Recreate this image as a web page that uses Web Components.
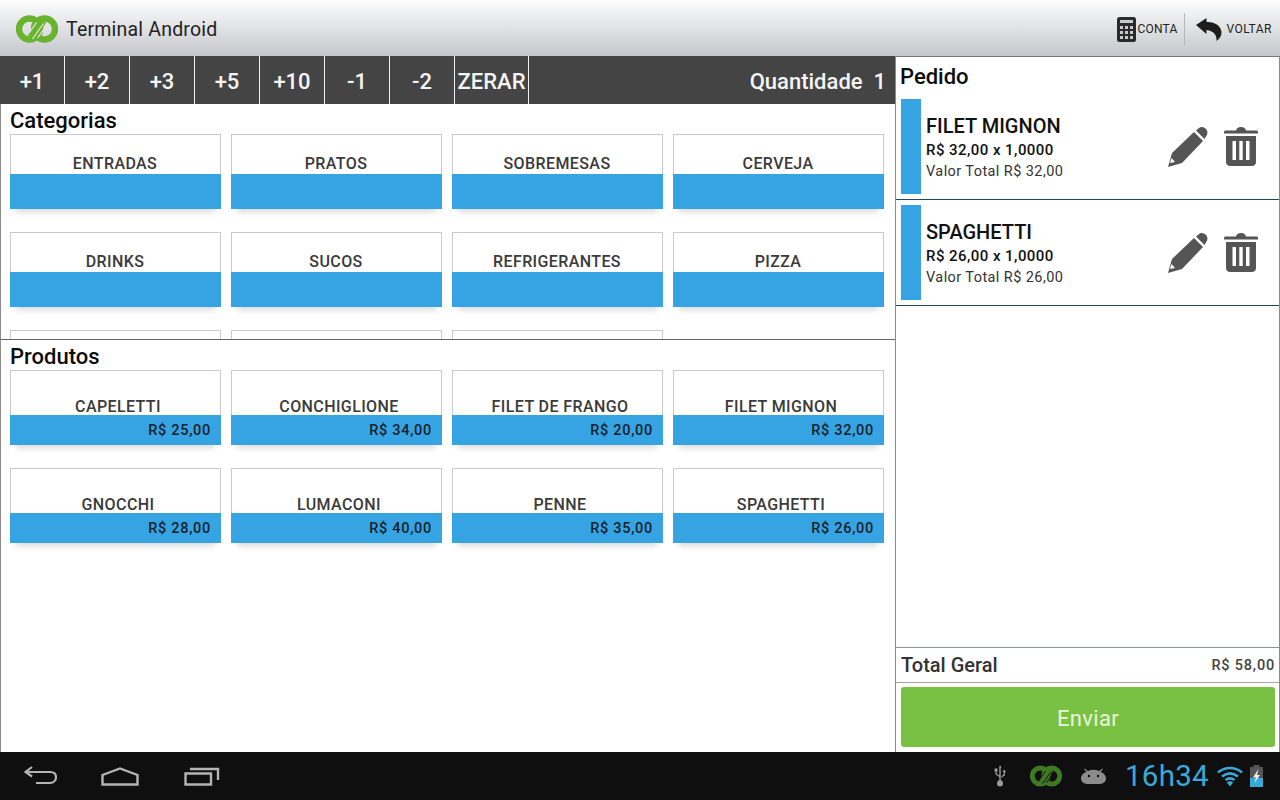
<!DOCTYPE html>
<html lang="pt">
<head>
<meta charset="utf-8">
<title>Terminal Android</title>
<style>
  html, body { margin: 0; padding: 0; height: 100%; overflow: hidden; background: #fff; }
  body { font-family: Roboto, "Liberation Sans", sans-serif; }
  #app { display: flex; flex-direction: column; width: 1280px; height: 800px; }
</style>
</head>
<body>
<div id="app">
  <action-bar></action-bar>
  <main-area>
    <div slot="left">
      <qty-toolbar quantity="1"></qty-toolbar>
      <panel-section title="Categorias" height="235">
        <grid-card name="ENTRADAS"></grid-card>
        <grid-card name="PRATOS"></grid-card>
        <grid-card name="SOBREMESAS"></grid-card>
        <grid-card name="CERVEJA"></grid-card>
        <grid-card name="DRINKS"></grid-card>
        <grid-card name="SUCOS"></grid-card>
        <grid-card name="REFRIGERANTES"></grid-card>
        <grid-card name="PIZZA"></grid-card>
        <!-- terceira linha cortada pelo scroll, sem texto visivel -->
        <grid-card></grid-card>
        <grid-card></grid-card>
        <grid-card></grid-card>
      </panel-section>
      <panel-section title="Produtos" divider>
        <grid-card name="CAPELETTI" price="R$ 25,00"></grid-card>
        <grid-card name="CONCHIGLIONE" price="R$ 34,00"></grid-card>
        <grid-card name="FILET DE FRANGO" price="R$ 20,00"></grid-card>
        <grid-card name="FILET MIGNON" price="R$ 32,00"></grid-card>
        <grid-card name="GNOCCHI" price="R$ 28,00"></grid-card>
        <grid-card name="LUMACONI" price="R$ 40,00"></grid-card>
        <grid-card name="PENNE" price="R$ 35,00"></grid-card>
        <grid-card name="SPAGHETTI" price="R$ 26,00"></grid-card>
      </panel-section>
    </div>
    <order-panel slot="right" total="R$ 58,00">
      <order-item name="FILET MIGNON" unit="R$ 32,00 x 1,0000" total="Valor Total R$ 32,00"></order-item>
      <order-item name="SPAGHETTI" unit="R$ 26,00 x 1,0000" total="Valor Total R$ 26,00"></order-item>
    </order-panel>
  </main-area>
  <system-bar></system-bar>
</div>

<script>
const LOGO = (color, cut) => `
  <circle cx="13.5" cy="14" r="10.5" fill="none" stroke="${color}" stroke-width="6.4"/>
  <circle cx="28.5" cy="14" r="10.5" fill="none" stroke="${color}" stroke-width="6.4"/>
  <path d="M14 21.5 L24 7 M18 21 L28 6.5" stroke="${color}" stroke-width="5" fill="none"/>
  <path d="M13 18 L20.5 7.5 M16.5 24 L27.5 8.5 M21.5 23 L29 12.5" stroke="${cut}" stroke-width="1.2" fill="none"/>`;

class ActionBar extends HTMLElement {
  connectedCallback() {
    this.attachShadow({mode: 'open'}).innerHTML = `
      <style>
        :host { display: flex; align-items: center; flex: 0 0 56px; box-sizing: border-box; height: 56px; padding-top: 2px;
          background: linear-gradient(#fdfdfd, #c4c7cc); color: #1c1c1c; }
        .logo { margin-left: 16px; width: 42px; height: 28px; }
        h1 { margin: 0 0 0 8px; font: 400 19.5px Roboto, sans-serif; letter-spacing: .2px; color: #222; flex: 1; }
        .act { display: flex; align-items: center; font: 400 12px Roboto, sans-serif; letter-spacing: .2px; color: #222; }
        .sep { width: 1px; height: 32px; background: #b4b7bb; margin: 0 11px 0 7px; }
        .conta svg { margin-right: 1px; }
        .voltar { margin-right: 8px; letter-spacing: .5px; }
      </style>
      <svg class="logo" viewBox="0 0 42 28">${LOGO('#69b32e', '#e6e8ea')}</svg>
      <h1>Terminal Android</h1>
      <div class="act conta">
        <svg width="19" height="25" viewBox="0 0 19 25">
          <rect width="19" height="25" rx="2.5" fill="#2b2b2b"/>
          <rect x="3" y="3" width="13" height="3" fill="#c8cacd"/>
          <path d="M3 9h3v3H3zM8 9h3v3H8zM13 9h3v3h-3zM3 14h3v3H3zM8 14h3v3H8zM13 14h3v3h-3zM3 19h3v3H3zM8 19h3v3H8zM13 19h3v3h-3z" fill="#c8cacd"/>
        </svg>
        <span>CONTA</span>
      </div>
      <div class="sep"></div>
      <div class="act voltar">
        <svg width="26" height="23" viewBox="0 0 26 23" style="margin-right:4px">
          <path d="M0 7 L10.5 0 V4 C20 3.5 25.5 9 25.5 14.5 C25.5 17.5 24 20.5 20.5 23 C21 18 18.5 13 10.5 12 V16 Z" fill="#1d1d1d"/>
        </svg>
        <span>VOLTAR</span>
      </div>`;
  }
}
customElements.define('action-bar', ActionBar);

class MainArea extends HTMLElement {
  connectedCallback() {
    this.attachShadow({mode: 'open'}).innerHTML = `
      <style>
        :host { display: flex; flex: 1; min-height: 0; }
        .left { display: flex; flex: 0 0 896px; min-width: 0; }
        ::slotted([slot=left]) { display: flex; flex-direction: column; width: 896px; box-sizing: border-box; border-right: 1px solid #8b8b8b; }
        ::slotted([slot=right]) { flex: 1; }
      </style>
      <div class="left"><slot name="left"></slot></div>
      <slot name="right"></slot>`;
  }
}
customElements.define('main-area', MainArea);

class QtyToolbar extends HTMLElement {
  connectedCallback() {
    const steps = ['+1', '+2', '+3', '+5', '+10', '-1', '-2'];
    this.attachShadow({mode: 'open'}).innerHTML = `
      <style>
        :host { display: flex; align-items: stretch; flex: 0 0 48px; height: 48px; background: #444; color: #f4f4f4;
          font: 500 22px Roboto, sans-serif; }
        .b { flex: 0 0 64px; display: flex; align-items: center; justify-content: center; border-right: 1px solid #f0f0f0; padding-top: 2px; box-sizing: content-box; height: 46px; }
        .z { flex-basis: 73px; }
        .q { margin-left: auto; padding: 2px 9px 0 0; display: flex; align-items: center; white-space: pre; }
      </style>
      ${steps.map(s => `<div class="b">${s}</div>`).join('')}
      <div class="b z">ZERAR</div>
      <div class="q">Quantidade  ${this.getAttribute('quantity')}</div>`;
  }
}
customElements.define('qty-toolbar', QtyToolbar);

class PanelSection extends HTMLElement {
  connectedCallback() {
    const h = this.getAttribute('height');
    this.attachShadow({mode: 'open'}).innerHTML = `
      <style>
        :host { display: block; box-sizing: border-box; overflow: hidden; border-left: 1px solid #8b8b8b;
          ${h ? `flex: 0 0 ${h}px; height: ${h}px;` : 'flex: 1; min-height: 0;'} }
        :host([divider]) { border-top: 1px solid #666; }
        h2 { margin: 0; padding-left: 9px; height: 30px; font: 500 22px/33px Roboto, sans-serif; color: #0c0c0c; }
        .grid { display: grid; grid-template-columns: repeat(4, 211px); column-gap: 10px; row-gap: 23px; padding-left: 9px; }
      </style>
      <h2>${this.getAttribute('title')}</h2>
      <div class="grid"><slot></slot></div>`;
    this.removeAttribute('title');
  }
}
customElements.define('panel-section', PanelSection);

class GridCard extends HTMLElement {
  connectedCallback() {
    const price = this.getAttribute('price');
    this.attachShadow({mode: 'open'}).innerHTML = `
      <style>
        :host { display: flex; flex-direction: column; box-sizing: border-box; height: 75px; background: #fff;
          border: 1px solid #c9c9d6; border-bottom: 0; position: relative; box-shadow: 0 9px 6px -6px rgba(0,0,0,.15); }
        .name { flex: 1; display: flex; align-items: flex-end; justify-content: center; font: 500 16px/20px Roboto, sans-serif;
          letter-spacing: .4px; color: #3a3a3a; padding-right: 1px; }
        .name.p { padding: 0 0 0 5px; line-height: 18px; margin-bottom: -1px; }
        .bar { margin: 0 -1px; background: #36a4e3; height: 35px; position: relative; }
        .bar.p { height: 30px; display: flex; align-items: center; justify-content: flex-end; padding-right: 10px;
          font: 500 14.5px Roboto, sans-serif; letter-spacing: .7px; color: #14222c; }
      </style>
      <div class="name ${price ? 'p' : ''}">${this.getAttribute('name') || ''}</div>
      <div class="bar ${price ? 'p' : ''}">${price || ''}</div>`;
  }
}
customElements.define('grid-card', GridCard);

class OrderPanel extends HTMLElement {
  connectedCallback() {
    this.attachShadow({mode: 'open'}).innerHTML = `
      <style>
        :host { display: flex; flex-direction: column; box-sizing: border-box; border-right: 1px solid #8b8b8b; border-top: 1px solid #777; min-width: 0; }
        h2 { margin: 0; padding-left: 4px; height: 37px; font: 500 22px/40px Roboto, sans-serif; color: #0c0c0c; }
        .list { flex: 1; min-height: 0; }
        .total { display: flex; align-items: center; justify-content: space-between; box-sizing: border-box; height: 36px;
          padding: 0 4px 0 5px; border-top: 1px solid #8d959b; border-bottom: 1px solid #a5a5a5; color: #333; }
        .total b { font: 500 20px Roboto, sans-serif; }
        .total span { font: 500 14.5px Roboto, sans-serif; letter-spacing: .8px; color: #444; }
        .send { margin: 4px 4px 5px 5px; height: 60px; padding-top: 2px; box-sizing: border-box; background: #79c143; border-radius: 3px; display: flex;
          align-items: center; justify-content: center; color: #eaf6dc; font: 400 22px Roboto, sans-serif; letter-spacing: .3px; }
      </style>
      <h2>Pedido</h2>
      <div class="list"><slot></slot></div>
      <div class="total"><b>Total Geral</b><span>${this.getAttribute('total')}</span></div>
      <div class="send">Enviar</div>`;
  }
}
customElements.define('order-panel', OrderPanel);

class OrderItem extends HTMLElement {
  connectedCallback() {
    this.attachShadow({mode: 'open'}).innerHTML = `
      <style>
        :host { display: flex; align-items: center; box-sizing: border-box; height: 106px; border-bottom: 1px solid #1d4a5e; padding: 5px 0 5px 5px; }
        .mark { width: 20px; align-self: stretch; background: #36a4e3; }
        .txt { flex: 1; padding: 2px 0 0 5px; color: #111; display: flex; flex-direction: column; }
        .n { font: 500 20px/26px Roboto, sans-serif; }
        .u { font: 500 15px/20px Roboto, sans-serif; letter-spacing: .45px; margin-top: 1px; }
        .t { font: 400 14.5px/21px Roboto, sans-serif; letter-spacing: .42px; color: #333; padding-top: 1px; }
        svg { flex: none; }
        .pen { margin-right: 16px; }
        .bin { margin-right: 21px; margin-bottom: 1px; }
      </style>
      <div class="mark"></div>
      <div class="txt">
        <div class="n">${this.getAttribute('name')}</div>
        <div class="u">${this.getAttribute('unit')}</div>
        <div class="t">${this.getAttribute('total')}</div>
      </div>
      <svg class="pen" width="40" height="40" viewBox="0 0 40 40">
        <path d="M0 40 L4 26 L26 5 L35 14 L14 36 Z" fill="#555"/>
        <path d="M28 3.5 L31 1 C33 -0.5 35.5 -0.3 37.5 1.5 C39.7 3.5 40 6.5 38.5 8.5 L36.5 12 Z" fill="#555"/>
        <path d="M2 36 L3.5 31 L7 35 Z" fill="#fff"/>
      </svg>
      <svg class="bin" width="34" height="39" viewBox="0 0 34 39">
        <path d="M0 5 C0 4 1 3.5 2 3.5 H12 C12.5 1.5 14 0 17 0 C20 0 21.5 1.5 22 3.5 H32 C33 3.5 34 4 34 5 V6.5 H0 Z" fill="#555"/>
        <path d="M2 9 H32 V35 C32 37.5 30 39 28 39 H6 C4 39 2 37.5 2 35 Z" fill="#555"/>
        <path d="M8.5 14 H12 V33 H8.5 Z M15.3 14 H18.7 V33 H15.3 Z M22 14 H25.5 V33 H22 Z" fill="#fff"/>
      </svg>`;
  }
}
customElements.define('order-item', OrderItem);

class SystemBar extends HTMLElement {
  connectedCallback() {
    this.attachShadow({mode: 'open'}).innerHTML = `
      <style>
        :host { display: flex; align-items: center; flex: 0 0 48px; height: 48px; background: #0f0f0f; }
        .nav { display: flex; align-items: center; flex: 1; padding-left: 24px; }
        .st { display: flex; align-items: center; }
        .clock { font: 400 29.5px Roboto, sans-serif; color: #39a9d8; letter-spacing: .3px; margin: 0 8px 0 19px; }
      </style>
      <div class="nav">
        <svg width="34" height="20" viewBox="0 0 34 20" fill="none" stroke="#b4b4b4" stroke-width="2.2">
          <path d="M8 1 L1.5 6 L8 10.5 M2 6 H26 C30 6 32 8 32 11 C32 14 30 17 26 17 H12"/>
        </svg>
        <svg width="38" height="19" viewBox="0 0 38 19" fill="none" stroke="#b4b4b4" stroke-width="2.4" style="margin-left:43px">
          <path d="M1.5 17.5 V8 L19 1.5 L36.5 8 V17.5 Z"/>
        </svg>
        <svg width="36" height="19" viewBox="0 0 36 19" fill="none" stroke="#b4b4b4" stroke-width="2.4" style="margin-left:45px">
          <path d="M1.5 6.5 H27 V17.5 H1.5 Z M6 2 H34 V13" />
        </svg>
      </div>
      <div class="st">
        <svg width="16" height="22" viewBox="0 0 14 22" fill="#9a9a9a">
          <path d="M6 3 L7 0 L8.5 3 H7.7 V15 C8.8 15.4 10 16.5 10 18.5 A3 3 0 0 1 4 18.5 C4 16.5 5.2 15.4 6.3 15 V12 L2.5 9.5 V6.5 H1.5 V3.5 H4.5 V6.5 H3.7 V8.8 L6.3 10.5 V3 Z M8.5 11 L10.7 9.5 V7 H9.5 L11.2 4.5 L13 7 H12 V10.2 L8.5 12.7 Z"/>
        </svg>
        <svg width="32" height="22" viewBox="0 0 42 28" style="margin-left:22px">${LOGO('#3f7a23', '#0f0f0f')}</svg>
        <svg width="25" height="16" viewBox="0 0 25 16" style="margin-left:19px" fill="#8c8c8c">
          <path d="M3.5 0.5 L7 3 A14 14 0 0 1 18 3 L21.5 0.5 L22 1.2 L19.5 3.8 C22.5 5 25 7.5 25 10.5 C25 13.8 22 16 18 16 H7 C3 16 0 13.8 0 10.5 C0 7.5 2.5 5 5.5 3.8 L3 1.2 Z"/>
          <circle cx="8" cy="8" r="1.2" fill="#0f0f0f"/><circle cx="17" cy="8" r="1.2" fill="#0f0f0f"/>
        </svg>
        <div class="clock">16h34</div>
        <svg width="26" height="21" viewBox="0 0 26 21" fill="none" stroke="#39a9d8" stroke-width="2.6">
          <path d="M1 6.5 C8 0.5 18 0.5 25 6.5 M5 10.5 C10 6.5 16 6.5 21 10.5 M8.5 14 C11.5 11.8 14.5 11.8 17.5 14"/>
          <path d="M13 20.5 L9.7 16.3 C11.8 15 14.2 15 16.3 16.3 Z" fill="#39a9d8" stroke="none"/>
        </svg>
        <svg width="15" height="22" viewBox="0 0 15 22" style="margin:0 16px 0 6px">
          <rect x="4.5" y="0" width="6" height="2.5" fill="#555"/>
          <rect x="1" y="2" width="13" height="20" fill="#555"/>
          <rect x="1" y="13" width="13" height="9" fill="#39a9d8"/>
          <path d="M9.5 4 L4 12.5 H7 L5.5 18 L11 10 H8 Z" fill="#eee"/>
        </svg>
      </div>`;
  }
}
customElements.define('system-bar', SystemBar);
</script>
</body>
</html>
